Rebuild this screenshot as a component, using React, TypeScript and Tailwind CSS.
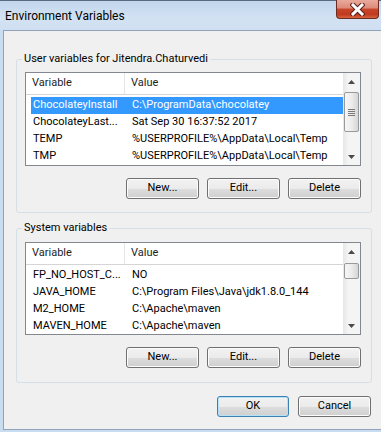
import React from "react";

type Row = { name: string; value: string; selected?: boolean };

const userVars: Row[] = [
  { name: "ChocolateyInstall", value: "C:\\ProgramData\\chocolatey", selected: true },
  { name: "ChocolateyLast...", value: "Sat Sep 30 16:37:52 2017" },
  { name: "TEMP", value: "%USERPROFILE%\\AppData\\Local\\Temp" },
  { name: "TMP", value: "%USERPROFILE%\\AppData\\Local\\Temp" },
];

const systemVars: Row[] = [
  { name: "FP_NO_HOST_C...", value: "NO" },
  { name: "JAVA_HOME", value: "C:\\Program Files\\Java\\jdk1.8.0_144" },
  { name: "M2_HOME", value: "C:\\Apache\\maven" },
  { name: "MAVEN_HOME", value: "C:\\Apache\\maven" },
];

function CloseButton() {
  return (
    <div className="absolute top-0 left-[336px] w-[43px] h-[19px] rounded-b-[4px] border border-t-0 border-[#6b2b22] bg-[linear-gradient(to_bottom,#e9a99b_0%,#dd8a78_45%,#c8462b_50%,#c23a20_80%,#d5653f_100%)] flex items-center justify-center">
      <svg width="15" height="13" viewBox="0 0 15 13">
        <path d="M3 2 L12 11 M12 2 L3 11" stroke="#5a2018" strokeWidth="5" strokeLinecap="square" />
        <path d="M3 2 L12 11 M12 2 L3 11" stroke="#ffffff" strokeWidth="3" strokeLinecap="square" />
      </svg>
    </div>
  );
}

function ScrollBar({ thumbTop, thumbHeight, grip }: { thumbTop: number; thumbHeight: number; grip?: boolean }) {
  return (
    <div className="relative w-[17px] h-full bg-[linear-gradient(to_right,#e6e6e6,#f4f4f4_30%,#f4f4f4)]">
      <div className="h-[17px] flex items-center justify-center">
        <svg width="7" height="4" viewBox="0 0 7 4">
          <path d="M0 4 L3.5 0 L7 4 Z" fill="#4a4a4a" />
        </svg>
      </div>
      <div
        className="absolute left-[1px] w-[15px] rounded-[2px] border border-[#999] bg-[linear-gradient(to_right,#f6f6f6,#ececec_50%,#d6d6d6)] flex flex-col items-center justify-center gap-[1px]"
        style={{ top: thumbTop, height: thumbHeight }}
      >
        {grip && (
          <>
            <div className="w-[7px] h-[1px] bg-[#7a7a7a]" />
            <div className="w-[7px] h-[1px] bg-[#7a7a7a]" />
            <div className="w-[7px] h-[1px] bg-[#7a7a7a]" />
            <div className="w-[7px] h-[1px] bg-[#7a7a7a]" />
          </>
        )}
      </div>
      <div className="absolute bottom-0 left-0 h-[17px] w-[17px] flex items-center justify-center">
        <svg width="7" height="4" viewBox="0 0 7 4">
          <path d="M0 0 L7 0 L3.5 4 Z" fill="#4a4a4a" />
        </svg>
      </div>
    </div>
  );
}

function VarList({ rows, height, thumbTop, thumbHeight, grip }: { rows: Row[]; height: number; thumbTop: number; thumbHeight: number; grip?: boolean }) {
  return (
    <div className="w-[336px] border border-[#828790] bg-white flex" style={{ height }}>
      <div className="flex-1 overflow-hidden">
        <div className="h-[22px] flex border-b border-[#d5d5d5] text-[#1e1e1e]">
          <div className="w-[99px] border-r border-[#e5e5e5] pl-[6px] flex items-center">Variable</div>
          <div className="flex-1 pl-[6px] flex items-center">Value</div>
        </div>
        <div className="pt-[2px] pl-[5px]">
          {rows.map((r) => (
            <div
              key={r.name}
              className={`h-[17px] flex items-center whitespace-nowrap ${r.selected ? "bg-[#3399ff] text-white" : "text-black"}`}
            >
              <div className="w-[101px] pl-[2px]">{r.name}</div>
              <div>{r.value}</div>
            </div>
          ))}
        </div>
      </div>
      <ScrollBar thumbTop={thumbTop} thumbHeight={thumbHeight} grip={grip} />
    </div>
  );
}

function Button({ label, primary, w = 73 }: { label: string; primary?: boolean; w?: number }) {
  return (
    <div
      style={{ width: w }}
      className={`h-[21px] rounded-[3px] border ${primary ? "border-[#3c7fb1] shadow-[inset_0_0_0_1px_#b6e2f7]" : "border-[#707070] shadow-[inset_0_0_0_1px_#fcfcfc]"} bg-[linear-gradient(to_bottom,#f2f2f2_0%,#ebebeb_50%,#dddddd_51%,#cfcfcf_100%)] flex items-center justify-center text-black`}
    >
      {label}
    </div>
  );
}

function Group({ title, children, className }: { title: string; children: React.ReactNode; className?: string }) {
  return (
    <fieldset className={`w-[356px] ml-[12px] border border-[#d5dfe5] rounded-[3px] ${className ?? ""}`}>
      <legend className="ml-[5px] px-[2px] text-black leading-[16px]">{title}</legend>
      <div className="pl-[8px]">{children}</div>
    </fieldset>
  );
}

export default function App() {
  return (
    <div className="w-[381px] h-[432px] relative overflow-hidden bg-[#c9dcf0] font-['Roboto',sans-serif] text-[11px]">
      <div className="h-[30px] flex items-center pl-[5px] border-t border-[#5b6b7d] bg-[linear-gradient(to_bottom,#c2d6ec,#d3e2f3_60%,#cfdff1)]">
        <span className="text-[12px] text-black">Environment Variables</span>
      </div>
      <CloseButton />
      <div className="ml-[3px] h-[400px] bg-[#f0f0f0] border-l border-t border-b border-[#8fa3ba]">
        <div className="pt-[20px]">
          <Group title="User variables for Jitendra.Chaturvedi" className="pb-[13px]">
            <div className="mt-[5px]">
              <VarList rows={userVars} height={94} thumbTop={19} thumbHeight={40} grip />
            </div>
            <div className="w-[336px] mt-[12px] flex justify-end gap-[8px]">
              <Button label="New..." />
              <Button label="Edit..." />
              <Button label="Delete" />
            </div>
          </Group>
          <Group title="System variables" className="mt-[7px] pb-[14px]">
            <div className="mt-[6px]">
              <VarList rows={systemVars} height={93} thumbTop={20} thumbHeight={16} />
            </div>
            <div className="w-[336px] mt-[12px] flex justify-end gap-[8px]">
              <Button label="New..." />
              <Button label="Edit..." />
              <Button label="Delete" />
            </div>
          </Group>
          <div className="mt-[13px] pr-[10px] flex justify-end gap-[9px]">
            <Button label="OK" primary w={72} />
            <Button label="Cancel" />
          </div>
        </div>
      </div>
    </div>
  );
}
